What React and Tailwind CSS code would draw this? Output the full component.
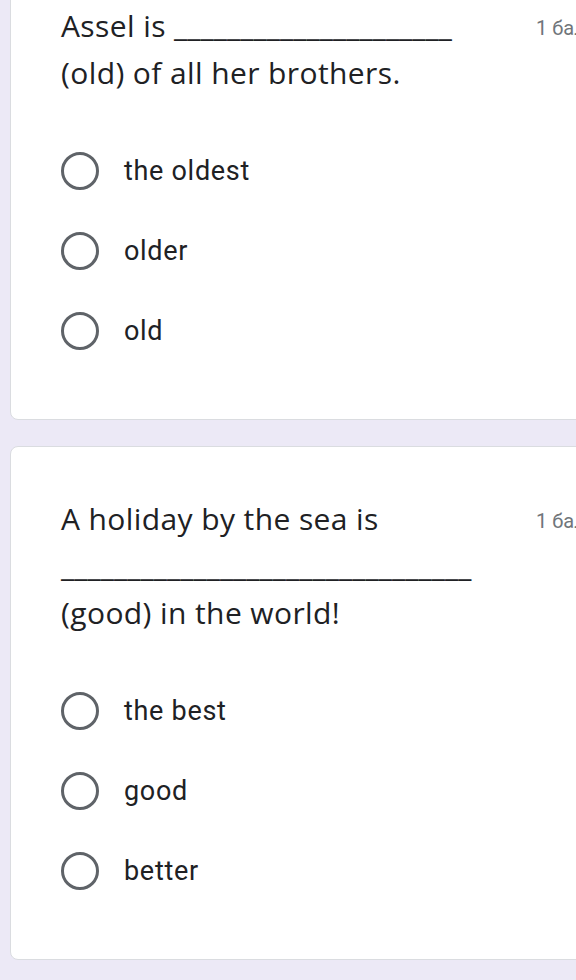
import React from 'react';

const questions = [
  {
    lines: [['Assel is ', '_____________________'], ['(old) of all her brothers.']],
    options: ['the oldest', 'older', 'old'],
  },
  {
    lines: [['A holiday by the sea is'], ['', '_______________________________'], ['(good) in the world!']],
    options: ['the best', 'good', 'better'],
  },
];

const Radio = () => (
  <div className="w-[38px] h-[38px] rounded-full border-[3px] border-[#5f6368] shrink-0" />
);

const QuestionCard = ({ q }) => (
  <div className="bg-white border border-[#dadce0] rounded-lg w-[640px] pt-[48px] pb-[48px] pl-[50px]">
    <div className="flex">
      <div className="w-[475px] text-[30px] tracking-[0.4px] leading-[47px] text-[#202124] whitespace-nowrap" style={{ fontFamily: '"Open Sans", sans-serif' }}>
        {q.lines.map(([text, blank], i) => (
          <div key={i}>
            {text}
            {blank && <span className="tracking-[0.1px]">{blank}</span>}
          </div>
        ))}
      </div>
      <div className="pt-[3px] text-[20px] leading-[47px] text-[#70757a] whitespace-nowrap" style={{ fontFamily: 'Roboto, sans-serif' }}>
        1 балл
      </div>
    </div>
    <div className="mt-[35px] flex flex-col">
      {q.options.map((o) => (
        <div key={o} className="h-[80px] flex items-center">
          <Radio />
          <span className="ml-[25px] text-[27px] tracking-[0.7px] text-[#202124]" style={{ fontFamily: 'Roboto, sans-serif' }}>
            {o}
          </span>
        </div>
      ))}
    </div>
  </div>
);

export default function App() {
  return (
    <div className="w-[576px] h-[980px] overflow-hidden bg-[#ece9f6]">
      <div className="mt-[-47px] ml-[10px] flex flex-col gap-[26px]">
        {questions.map((q, i) => (
          <QuestionCard key={i} q={q} />
        ))}
      </div>
    </div>
  );
}
